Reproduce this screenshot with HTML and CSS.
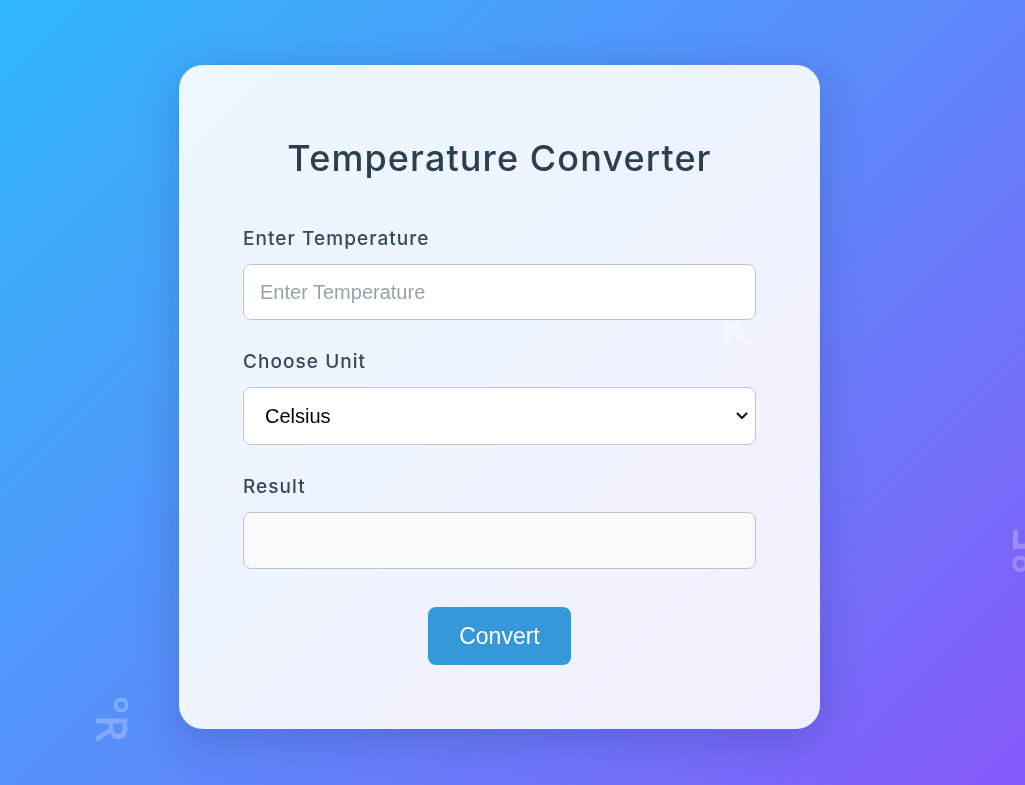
FILE: index.html
```html
<!DOCTYPE html>
<html lang="en">
<head>
<meta charset="utf-8">
<title>Temperature Converter</title>
<link rel="stylesheet" href="styles.css">
</head>
<body>
<div class="symbols" aria-hidden="true">
  <span class="sym sym-r">°R</span>
  <span class="sym sym-f">°F</span>
</div>
<main class="card">
  <span class="sym sym-k" aria-hidden="true">K</span>
  <h1 class="title">Temperature Converter</h1>
  <div class="field">
    <label class="label" for="temp">Enter Temperature</label>
    <input class="control" id="temp" type="text" placeholder="Enter Temperature">
  </div>
  <div class="field">
    <label class="label" for="unit">Choose Unit</label>
    <div class="select-wrap">
      <select class="control select" id="unit">
        <option>Celsius</option>
        <option>Fahrenheit</option>
        <option>Kelvin</option>
      </select>
      <svg class="chevron" width="12" height="8" viewBox="0 0 12 8" aria-hidden="true">
        <path d="M1.5 1.5 L6 6 L10.5 1.5" fill="none" stroke="#111" stroke-width="2" stroke-linecap="round" stroke-linejoin="round"/>
      </svg>
    </div>
  </div>
  <div class="field">
    <label class="label" for="result">Result</label>
    <input class="control result" id="result" type="text" readonly>
  </div>
  <div class="actions">
    <button class="btn" type="button">Convert</button>
  </div>
</main>
</body>
</html>
```

FILE: styles.css
```css
html, body {
  margin: 0;
  height: 100%;
}
body {
  min-height: 100vh;
  box-sizing: border-box;
  background: linear-gradient(135deg, #30b8fb 0%, #5a8cf9 50%, #8658fa 100%);
  display: flex;
  justify-content: center;
  align-items: flex-start;
  padding: 65px 26px 0 0;
  overflow: hidden;
  font-family: "Liberation Sans", Arial, sans-serif;
  position: relative;
}
.symbols {
  position: absolute;
  inset: 0;
  pointer-events: none;
}
.sym {
  position: absolute;
  color: rgba(255, 255, 255, 0.25);
  font-family: "Open Sans", sans-serif;
  font-weight: 600;
  line-height: 1;
  white-space: nowrap;
}
.sym-r {
  left: 90px;
  top: 697px;
  font-size: 44px;
  transform: rotate(90deg);
}
.sym-f {
  left: 1006px;
  top: 574px;
  font-size: 48px;
  transform: rotate(-90deg);
  transform-origin: 0 0;
}
.sym-k {
  left: 541px;
  top: 238px;
  font-size: 48px;
  font-weight: 600;
  color: rgba(255, 255, 255, 0.38);
  z-index: 0;
}
.card {
  position: relative;
  width: 641px;
  height: 664px;
  box-sizing: border-box;
  padding: 64px 64px 0;
  border-radius: 24px;
  background: rgba(255, 255, 255, 0.9);
  backdrop-filter: blur(6px);
  box-shadow: 0 10px 40px rgba(40, 40, 120, 0.25);
  display: flex;
  flex-direction: column;
}
.title {
  margin: 0 0 40px;
  text-align: center;
  font-family: "Inter", sans-serif;
  font-weight: 500;
  font-size: 36px;
  line-height: 58px;
  letter-spacing: 1.1px;
  color: #2c3e50;
}
.field {
  position: relative;
  z-index: 1;
  display: flex;
  flex-direction: column;
  margin-bottom: 30px;
}
.label {
  font-family: "Inter", sans-serif;
  font-weight: 500;
  font-size: 19px;
  line-height: 24px;
  color: #34495e;
  margin-bottom: 13px;
  letter-spacing: 1.05px;
}
.control {
  box-sizing: border-box;
  width: 513px;
  height: 56px;
  border: 1px solid #bdc3c7;
  border-radius: 8px;
  background: #ffffff;
  padding: 0 16px;
  font-family: "Liberation Sans", Arial, sans-serif;
  font-size: 20px;
  color: #000;
  outline: none;
}
.control::placeholder {
  color: #95a5a6;
}
.select-wrap {
  position: relative;
}
.select {
  height: 58px;
  padding: 0 40px 0 21px;
  appearance: none;
  -webkit-appearance: none;
}
.chevron {
  position: absolute;
  right: 8px;
  top: 25px;
  pointer-events: none;
}
.result {
  height: 57px;
  background: #f9f9f9;
}
.actions {
  display: flex;
  justify-content: center;
  margin-top: 8px;
}
.btn {
  width: 143px;
  height: 58px;
  border: none;
  border-radius: 8px;
  background: #3498db;
  color: #ffffff;
  font-family: "Liberation Sans", Arial, sans-serif;
  font-size: 23px;
  cursor: pointer;
}
```
